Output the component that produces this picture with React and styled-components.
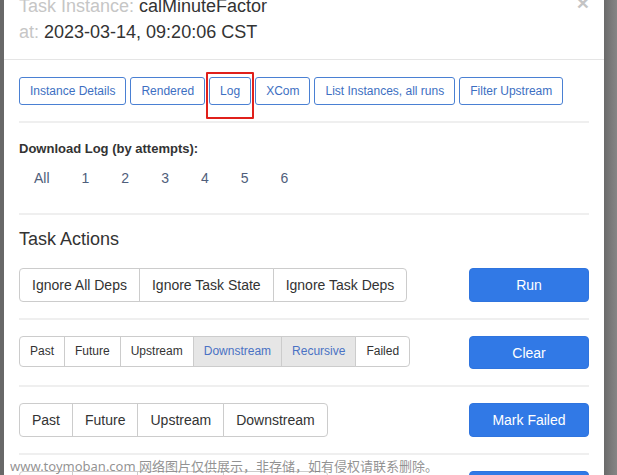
import React from 'react';
import styled, { createGlobalStyle } from 'styled-components';

const GlobalStyle = createGlobalStyle`
  html, body {
    margin: 0;
    padding: 0;
    height: 100%;
    overflow: hidden;
  }
  body {
    background: #6e6e6e;
    font-family: "Liberation Sans", Arial, sans-serif;
    color: #333;
  }
`;

const Backdrop = styled.div`
  position: relative;
  width: 617px;
  height: 475px;
  overflow: hidden;
  background: linear-gradient(90deg, #686868 0, #6a6a6a 604px, #7c7c7c 612px, #858585 617px);
`;

const Modal = styled.div`
  margin-left: 4px;
  margin-top: -21px;
  width: 600px;
  background: #fff;
  min-height: 520px;
`;

const Header = styled.div`
  position: relative;
  padding: 15px 15px 14px;
  border-bottom: 1px solid #e5e5e5;
`;

const Title = styled.h4`
  margin: 0;
  font-size: 18px;
  font-weight: normal;
  line-height: 25.5px;
  color: #333;
`;

const Muted = styled.span`
  color: #c6c6c6;
`;

const Close = styled.span`
  position: absolute;
  right: 15px;
  top: 13px;
  font-size: 21px;
  font-weight: bold;
  line-height: 1;
  color: #c4c4c4;
`;

const Body = styled.div`
  padding: 17px 15px 0;
`;

const LinkRow = styled.div`
  display: flex;
  gap: 4px;
`;

const OutlineButton = styled.button`
  position: relative;
  height: 28px;
  padding: 0 10px;
  font-family: inherit;
  font-size: 12px;
  color: #3d6fc2;
  background: #fff;
  border: 1px solid #4a80d3;
  border-radius: 3px;
`;

const Highlight = styled.span`
  position: absolute;
  left: -4px;
  right: -4px;
  top: -6px;
  bottom: -15px;
  border: 2px solid #e0201b;
  border-radius: 1px;
  pointer-events: none;
`;

const Divider = styled.hr`
  margin: ${p => p.$top || 16}px 0 ${p => p.$bottom || 16}px;
  border: 0;
  border-top: 2px solid #efefef;
`;

const SubTitle = styled.div`
  font-size: 13px;
  font-weight: bold;
  color: #333;
  line-height: 18px;
`;

const Pills = styled.ul`
  display: flex;
  list-style: none;
  margin: 0;
  padding: 0;
`;

const Pill = styled.li`
  padding: 10px 15px;
  margin-right: 2px;
  font-size: 14px;
  line-height: 20px;
  color: #4f5e7b;
`;

const SectionTitle = styled.h4`
  margin: 0 0 19px;
  font-size: 18px;
  font-weight: normal;
  line-height: 20px;
  color: #333;
`;

const ActionRow = styled.div`
  display: flex;
  justify-content: space-between;
  align-items: flex-start;
`;

const Group = styled.div`
  display: flex;
`;

const GroupButton = styled.button`
  font-family: inherit;
  font-size: ${p => (p.$small ? 12 : 14)}px;
  line-height: ${p => (p.$small ? 19 : 20)}px;
  padding: ${p => (p.$small ? '5px 10px' : '6px 12px')};
  color: ${p => (p.$active ? '#4a72c4' : '#333')};
  background: ${p => (p.$active ? '#e6e6e6' : '#fff')};
  border: 1px solid #ccc;
  margin-left: -1px;
  &:first-child {
    margin-left: 0;
    border-radius: 4px 0 0 4px;
  }
  &:last-child {
    border-radius: 0 4px 4px 0;
  }
`;

const PrimaryButton = styled.button`
  width: 120px;
  height: ${p => p.$h || 34}px;
  font-family: inherit;
  font-size: 14px;
  color: #fff;
  background: #3179e6;
  border: 1px solid #2f74de;
  border-radius: 4px;
`;

const Watermark = styled.div`
  position: absolute;
  left: 10px;
  top: 457px;
  font-family: "Noto Sans", "Noto Sans CJK SC", sans-serif;
  font-size: 13px;
  line-height: 18px;
  color: rgba(110, 110, 110, 0.75);
  white-space: nowrap;
`;

const links = ['Instance Details', 'Rendered', 'Log', 'XCom', 'List Instances, all runs', 'Filter Upstream'];
const attempts = ['All', '1', '2', '3', '4', '5', '6'];

const ActionGroup = ({ items, small, active = [] }) => (
  <Group>
    {items.map(label => (
      <GroupButton key={label} $small={small} $active={active.includes(label)}>
        {label}
      </GroupButton>
    ))}
  </Group>
);

export default function App() {
  return (
    <Backdrop>
      <GlobalStyle />
      <Modal>
        <Header>
          <Title>
            <Muted>Task Instance:</Muted> calMinuteFactor
            <br />
            <Muted>at:</Muted> 2023-03-14, 09:20:06 CST
          </Title>
          <Close>×</Close>
        </Header>
        <Body>
          <LinkRow>
            {links.map(label => (
              <OutlineButton key={label}>
                {label}
                {label === 'Log' && <Highlight />}
              </OutlineButton>
            ))}
          </LinkRow>
          <Divider $top={16} $bottom={17} />
          <SubTitle>Download Log (by attempts):</SubTitle>
          <Pills>
            {attempts.map(a => (
              <Pill key={a}>{a}</Pill>
            ))}
          </Pills>
          <Divider $top={15} $bottom={14} />
          <SectionTitle>Task Actions</SectionTitle>
          <ActionRow>
            <ActionGroup items={['Ignore All Deps', 'Ignore Task State', 'Ignore Task Deps']} />
            <PrimaryButton>Run</PrimaryButton>
          </ActionRow>
          <Divider />
          <ActionRow>
            <ActionGroup
              small
              items={['Past', 'Future', 'Upstream', 'Downstream', 'Recursive', 'Failed']}
              active={['Downstream', 'Recursive']}
            />
            <PrimaryButton $h={33}>Clear</PrimaryButton>
          </ActionRow>
          <Divider />
          <ActionRow>
            <ActionGroup items={['Past', 'Future', 'Upstream', 'Downstream']} />
            <PrimaryButton>Mark Failed</PrimaryButton>
          </ActionRow>
          <Divider />
          <ActionRow>
            <ActionGroup items={['Past', 'Future', 'Upstream', 'Downstream']} />
            <PrimaryButton>Mark Success</PrimaryButton>
          </ActionRow>
        </Body>
      </Modal>
      <Watermark>www.toymoban.com 网络图片仅供展示，非存储，如有侵权请联系删除。</Watermark>
    </Backdrop>
  );
}
